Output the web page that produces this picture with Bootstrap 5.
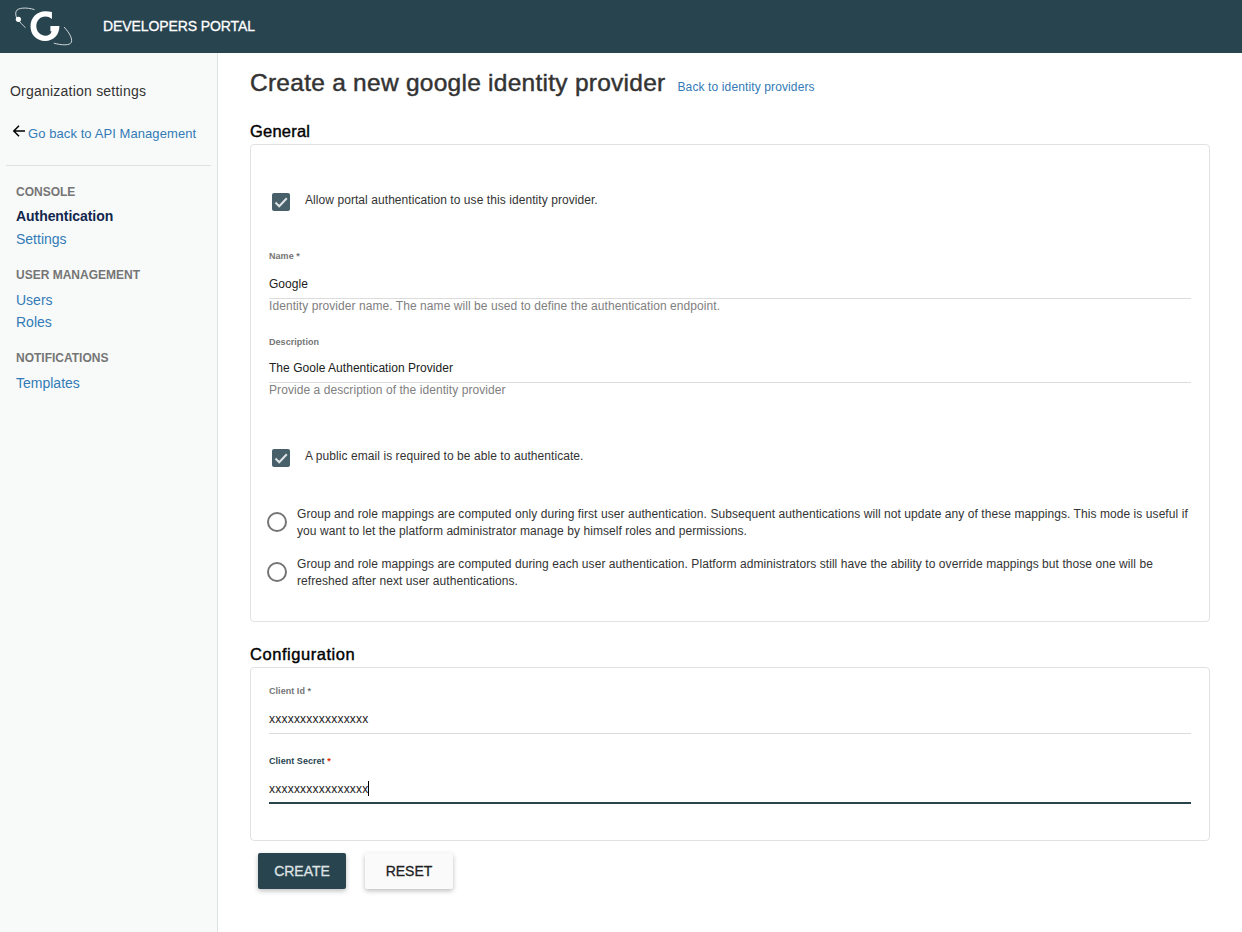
<!DOCTYPE html>
<html lang="en">
<head>
<meta charset="utf-8">
<meta name="viewport" content="width=device-width, initial-scale=1">
<title>Developers Portal</title>
<link href="https://cdn.jsdelivr.net/npm/bootstrap@5.3.0/dist/css/bootstrap.min.css" rel="stylesheet">
<style>
  body { font-family: "Liberation Sans", Arial, sans-serif; font-size: 12px; color: #333; background: #fff; overflow: hidden; }
  a { color: #337ab7; text-decoration: none; }
  .semi { -webkit-text-stroke: .3px currentColor; }
  .topbar { height: 53px; background: #28444f; color: #fff; }
  .topbar .logo { width: 60px; height: 42px; margin-left: 14px; }
  .topbar .brand { margin-left: 29px; padding-bottom: 2px; font-size: 14px; line-height: 20px; letter-spacing: -.1px; }
  .side { width: 218px; background: #f8faf9; border-right: 1px solid #dfe2e2; padding: 28px 6px 0; }
  .side .org { font-size: 14px; line-height: 20px; padding-left: 4px; letter-spacing: .22px; }
  .side .back { font-size: 13px; line-height: 20px; margin-top: 22px; padding-left: 6px; padding-bottom: 21px; border-bottom: 1px solid #dfe2e2; letter-spacing: .08px; }
  .side .back svg { width: 14px; height: 14px; margin-right: 2px; margin-top: 1px; }
  .side .back a { padding-top: 1px; }
  .side h6 { font-size: 12px; line-height: 16px; font-weight: 700; color: #757575; margin: 17px 0 6px 10px; }
  .side h6.first { margin-top: 18px; margin-bottom: 5px; }
  .side .item { display: block; font-size: 14px; line-height: 22px; padding-left: 10px; }
  .side .item.active { color: #12264d; font-weight: 700; padding-bottom: 1px; letter-spacing: -.06px; }
  .page { padding: 14px 32px 0; min-width: 0; }
  .page h1 { font-size: 24.5px; line-height: 32px; margin: 0; color: #333; letter-spacing: .26px; -webkit-text-stroke-width: .45px; }
  .page .toplink { margin-left: 12px; letter-spacing: .12px; }
  .page h2 { font-size: 16.5px; line-height: 20px; margin: 22px 0 3px; color: #000; letter-spacing: .22px; -webkit-text-stroke-width: .4px; }
  .page h2.wide { letter-spacing: .54px; }
  .panel { border: 1px solid #e0e2e3; border-radius: 4px; padding: 0 18px; }
  .tick { width: 18px; height: 18px; margin: 2px 15px 0 3px; border-radius: 2px; background: #48606a; }
  .check-row, .hint, .choice { letter-spacing: .068px; }
  .check-row { height: 20px; line-height: 18px; }
  .lbl { font-size: 9px; line-height: 12px; color: #757575; font-weight: 700; letter-spacing: .05px; }
  .val { line-height: 20px; padding-bottom: 4px; border-bottom: 1px solid #dcdcdc; color: #212121; letter-spacing: .035px; }
  .val.masked { letter-spacing: .22px; }
  .val.focused { padding-bottom: 3px; border-bottom: 2px solid #28444f; }
  .caret { width: 1px; height: 15px; background: #000; margin: -1px 0 0 -1px; }
  .hint { line-height: 14px; color: #808080; }
  .choice { line-height: 17px; }
  .choice .ring { width: 20px; height: 20px; border: 2px solid #757575; border-radius: 50%; margin: 6px 10px 0 -2px; }
  .act { height: 36px; width: 88px; padding: 0; font-size: 14px; border: 0; border-radius: 2px; box-shadow: 0 2px 5px rgba(0,0,0,.26); }
  .act.go, .act.go:hover { background: #28444f; color: #dfe3e4; }
  .act.plain, .act.plain:hover { background: #fafafa; color: #212121; }
</style>
</head>
<body class="vh-100 d-flex flex-column">
<header class="topbar d-flex align-items-center flex-shrink-0">
  <svg class="logo" viewBox="14 5 60 42" fill="none">
    <path d="M34.500 8.600C26 6 17.500 6.800 16.200 10.200c-.9 2.300-.6 4.800 1.200 8.300M18.300 18.500c1.700 2.900 4.200 5.500 7.200 8.200" stroke="#dfe5e7" stroke-width=".9"/>
    <circle cx="18.400" cy="18.300" r="2.600" fill="#fff"/>
    <path d="M64 26c5 5.200 8.800 11.500 7.300 15.300-1.500 3.400-9.300 3-17.500.9" stroke="#dfe5e7" stroke-width=".9"/>
    <path d="M51.900 11v6.900c-2-1.700-4.100-2.500-6.500-2.500-5.200 0-9.100 4.200-9.100 9.700s3.900 9.600 9.100 9.600c3.300 0 5.500-1.700 6.200-4.500h-1.200V25h9c0 9-5.700 14.900-14.300 14.900S30.500 33.700 30.500 25.200 37 10.200 45.300 10.200c2.400 0 4.600.3 6.600.8z" fill="#fff"/>
  </svg>
  <span class="brand semi">DEVELOPERS PORTAL</span>
</header>
<div class="d-flex flex-grow-1">
  <nav class="side flex-shrink-0">
    <div class="org">Organization settings</div>
    <div class="back d-flex align-items-start">
      <svg viewBox="0 0 14 14" fill="none" stroke="#000" stroke-width="1.500"><path d="M13 7H2M7 1.800 1.800 7 7 12.200"/></svg>
      <a href="#">Go back to API Management</a>
    </div>
    <h6 class="first">CONSOLE</h6>
    <a class="item active" href="#">Authentication</a>
    <a class="item" href="#">Settings</a>
    <h6>USER MANAGEMENT</h6>
    <a class="item" href="#">Users</a>
    <a class="item" href="#">Roles</a>
    <h6>NOTIFICATIONS</h6>
    <a class="item" href="#">Templates</a>
  </nav>
  <main class="page flex-grow-1">
    <div class="d-flex align-items-baseline">
      <h1 class="semi fw-normal">Create a new google identity provider</h1>
      <a href="#" class="toplink">Back to identity providers</a>
    </div>
    <h2 class="semi fw-normal">General</h2>
    <section class="panel" style="padding-top:46px;padding-bottom:31px">
      <div class="check-row d-flex">
        <span class="tick"><svg class="d-block" width="18" height="18" fill="none" stroke="#dfe4e6" stroke-width="2"><path d="m3.500 9.500 3.700 3.700 7.600-8"/></svg></span>
        <span>Allow portal authentication to use this identity provider.</span>
      </div>
      <div class="lbl" style="margin-top:39px">Name *</div>
      <div class="val" style="margin-top:12px">Google</div>
      <div class="hint">Identity provider name. The name will be used to define the authentication endpoint.</div>
      <div class="lbl" style="margin-top:23px">Description</div>
      <div class="val" style="margin-top:10px">The Goole Authentication Provider</div>
      <div class="hint">Provide a description of the identity provider</div>
      <div class="check-row d-flex" style="margin-top:50px">
        <span class="tick"><svg class="d-block" width="18" height="18" fill="none" stroke="#dfe4e6" stroke-width="2"><path d="m3.500 9.500 3.700 3.700 7.600-8"/></svg></span>
        <span>A public email is required to be able to authenticate.</span>
      </div>
      <div class="choice d-flex" style="margin-top:39px"><span class="ring flex-shrink-0"></span>
        <span class="text-nowrap">Group and role mappings are computed only during first user authentication. Subsequent authentications will not update any of these mappings. This mode is useful if<br>you want to let the platform administrator manage by himself roles and permissions.</span></div>
      <div class="choice d-flex" style="margin-top:16px"><span class="ring flex-shrink-0"></span>
        <span class="text-nowrap">Group and role mappings are computed during each user authentication. Platform administrators still have the ability to override mappings but those one will be<br>refreshed after next user authentications.</span></div>
    </section>
    <h2 class="semi fw-normal wide">Configuration</h2>
    <section class="panel" style="padding-top:17px;padding-bottom:36px">
      <div class="lbl">Client Id *</div>
      <div class="val masked" style="margin-top:12px">xxxxxxxxxxxxxxxx</div>
      <div class="lbl" style="margin-top:21px;color:#28444f">Client Secret <span style="color:#dd2c00">*</span></div>
      <div class="val masked focused d-flex align-items-center" style="margin-top:12px">xxxxxxxxxxxxxxxx<span class="caret"></span></div>
    </section>
    <div class="d-flex" style="margin-top:12px;padding-left:8px;gap:19px">
      <button class="btn act go semi">CREATE</button>
      <button class="btn act plain semi">RESET</button>
    </div>
  </main>
</div>
<script src="https://cdn.jsdelivr.net/npm/bootstrap@5.3.0/dist/js/bootstrap.bundle.min.js"></script>
</body>
</html>
